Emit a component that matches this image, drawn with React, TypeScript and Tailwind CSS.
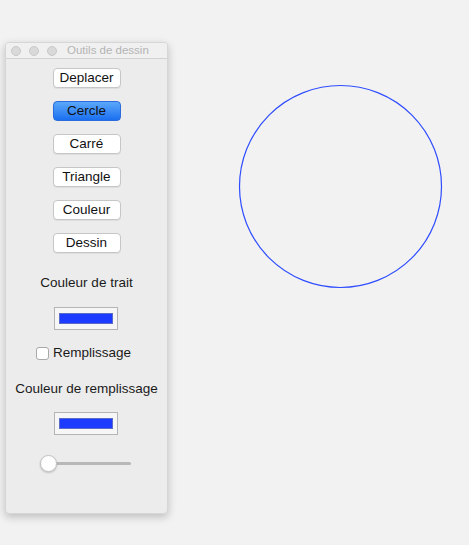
import React from 'react';

const tools = ['Deplacer', 'Cercle', 'Carré', 'Triangle', 'Couleur', 'Dessin'];

function ColorWell() {
  return (
    <div className="w-[64px] h-[23px] border border-[#b4b4b4] bg-[#f6f6f6] flex items-center justify-center">
      <div className="w-[54px] h-[11px] bg-[#1d3bff] border border-[#5a6cc8]" />
    </div>
  );
}

export default function App() {
  const active = 'Cercle';

  return (
    <div
      className="flex w-[469px] h-[545px] bg-[#f2f2f2] overflow-hidden"
      style={{ fontFamily: '"Liberation Sans", Arial, sans-serif' }}
    >
      <div className="pl-[5px] pt-[42px] shrink-0">
        <div className="w-[163px] h-[472px] bg-[#ececec] rounded-[4px] border border-[#d6d6d6] shadow-[0_3px_8px_rgba(0,0,0,0.22)] flex flex-col overflow-hidden">
          {/* title bar */}
          <div className="h-[16px] shrink-0 flex items-center pl-[5px] bg-[#f0f0f0] border-b border-[#d2d2d2]">
            <div className="flex gap-[8px]">
              <span className="w-[10px] h-[10px] rounded-full bg-[#d9d9d9] border border-[#c8c8c8]" />
              <span className="w-[10px] h-[10px] rounded-full bg-[#d9d9d9] border border-[#c8c8c8]" />
              <span className="w-[10px] h-[10px] rounded-full bg-[#d9d9d9] border border-[#c8c8c8]" />
            </div>
            <span className="ml-[10px] text-[11.5px] leading-none text-[#b4b4b4]">Outils de dessin</span>
          </div>

          <div className="flex flex-col items-center pt-[9px]">
            <div className="flex flex-col items-center gap-[13px]">
              {tools.map((t) =>
                t === active ? (
                  <button
                    key={t}
                    className="w-[68px] h-[20px] rounded-[4px] border border-[#2a6cdc] bg-gradient-to-b from-[#5aa7fa] to-[#1b6ff0] text-[13.5px] leading-none text-[#111]"
                  >
                    {t}
                  </button>
                ) : (
                  <button
                    key={t}
                    className="w-[68px] h-[20px] rounded-[4px] border border-[#c6c6c6] bg-white shadow-[0_1px_0_rgba(0,0,0,0.06)] text-[13.5px] leading-none text-[#111]"
                  >
                    {t}
                  </button>
                )
              )}
            </div>

            <p className="mt-[22px] text-[13.5px] leading-[16px] text-[#1a1a1a]">Couleur de trait</p>
            <div className="mt-[16px] -ml-[2px]">
              <ColorWell />
            </div>

            <label className="mt-[15px] self-start ml-[30px] flex items-center gap-[4px] h-[16px]">
              <span className="w-[13px] h-[13px] rounded-[3px] border border-[#a9a9a9] bg-white" />
              <span className="text-[13.5px] leading-[16px] text-[#1a1a1a]">Remplissage</span>
            </label>

            <p className="mt-[20px] text-[13.5px] leading-[16px] text-[#1a1a1a]">Couleur de remplissage</p>
            <div className="mt-[15px] -ml-[2px]">
              <ColorWell />
            </div>

            <div className="mt-[20px] -ml-[2px] w-[91px] h-[17px] relative flex items-center">
              <div className="w-full h-[3px] rounded-full bg-[#b8b8b8]" />
              <div className="absolute left-0 top-0 w-[17px] h-[17px] rounded-full bg-white border border-[#c4c4c4] shadow-[0_1px_2px_rgba(0,0,0,0.2)]" />
            </div>
          </div>
        </div>
      </div>

      <svg className="flex-1 h-[545px]" viewBox="0 0 301 545">
        <circle cx={172.5} cy={186.5} r={101} fill="none" stroke="#2f4dff" strokeWidth={1.2} />
      </svg>
    </div>
  );
}
